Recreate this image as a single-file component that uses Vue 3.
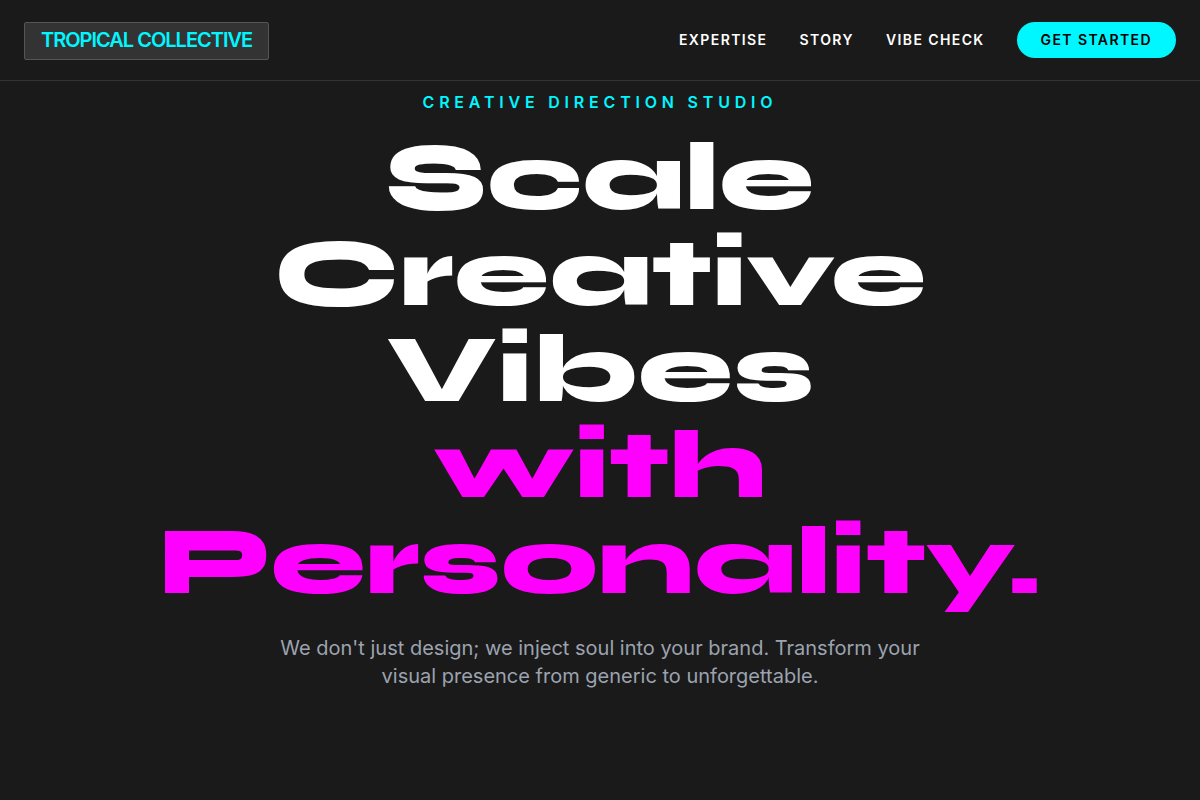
<script setup>
const links = [
  { label: 'Expertise', href: '#expertise' },
  { label: 'Story', href: '#story' },
  { label: 'Vibe Check', href: '#vibe-check' },
]
const headline = ['Scale', 'Creative', 'Vibes']
const accent = ['with', 'Personality.']
</script>

<template>
  <div class="page">
    <header class="bar">
      <a class="brand" href="#home">Tropical Collective</a>
      <nav class="nav" aria-label="Main">
        <a v-for="link in links" :key="link.href" class="link" :href="link.href">{{ link.label }}</a>
        <button class="cta" type="button">Get Started</button>
      </nav>
    </header>
    <main id="home" class="hero">
      <p class="eyebrow">Creative Direction Studio</p>
      <h1 class="title">
        <span v-for="word in headline" :key="word" class="line">{{ word }}</span>
        <span v-for="word in accent" :key="word" class="line accent">{{ word }}</span>
      </h1>
      <p class="lead">
        We don't just design; we inject soul into your brand. Transform your visual presence from generic to unforgettable.
      </p>
    </main>
  </div>
</template>

<style>
body {
  margin: 0;
  background: #1a1a1a;
}
</style>

<style scoped>
.page {
  min-height: 100vh;
  background: #1a1a1a;
  color: #fff;
  font-family: Inter, "Liberation Sans", sans-serif;
}
.bar {
  display: flex;
  align-items: flex-start;
  justify-content: space-between;
  padding: 22px 24px 20px;
  border-bottom: 1px solid #333;
}
.brand {
  padding: 3px 16px 5px;
  border: 1px solid #555;
  border-radius: 2px;
  background: #333;
  color: #00f7ff;
  font-size: 20px;
  font-weight: 600;
  line-height: 28px;
  letter-spacing: -0.05em;
  text-transform: uppercase;
  text-decoration: none;
}
.nav {
  display: flex;
  align-items: center;
  gap: 32px;
}
.link,
.cta {
  font-size: 14px;
  font-weight: 600;
  line-height: 20px;
  letter-spacing: 0.1em;
  text-transform: uppercase;
}
.link {
  color: #fff;
  text-decoration: none;
}
.cta {
  padding: 8px 24px;
  border: 0;
  border-radius: 18px;
  background: #00f7ff;
  color: #000;
  font-family: inherit;
  cursor: pointer;
}
.hero {
  display: flex;
  flex-direction: column;
  align-items: center;
  padding: 9px 24px 0;
  text-align: center;
}
.eyebrow {
  margin: 0 0 16px;
  color: #00f7ff;
  font-size: 16px;
  font-weight: 600;
  line-height: 24px;
  letter-spacing: 0.3em;
  text-transform: uppercase;
}
.title {
  margin: 0 0 24px;
  font-family: Syne, "DejaVu Sans", sans-serif;
  font-size: 96px;
  font-weight: 800;
  line-height: 96px;
}
.line {
  display: block;
}
.accent {
  color: #f0f;
}
.lead {
  max-width: 672px;
  margin: 0;
  color: #9ca3af;
  font-size: 20px;
  line-height: 28px;
}
</style>
